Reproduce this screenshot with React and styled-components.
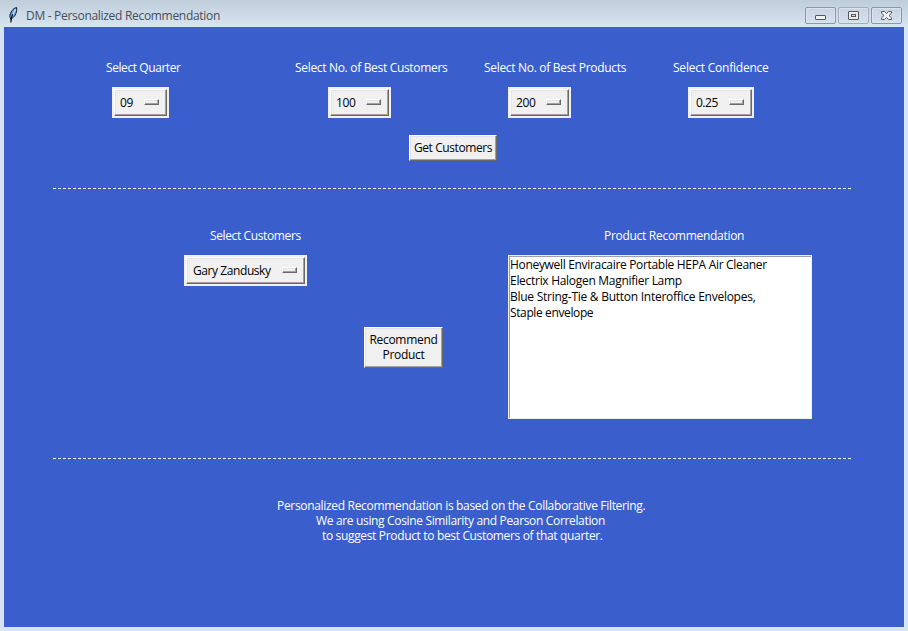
import React from "react";
import styled, { createGlobalStyle } from "styled-components";

const GlobalStyle = createGlobalStyle`
  * { box-sizing: border-box; }
  body {
    margin: 0;
    overflow: hidden;
    font-family: "Open Sans", "Noto Sans", sans-serif;
    font-size: 12px;
    line-height: 15px;
    color: #000;
  }
`;

const Window = styled.div`
  display: flex;
  flex-direction: column;
  width: 908px;
  height: 631px;
  padding: 0 4px 4px;
  background: linear-gradient(#bfcddb 0, #d7e4f2 27px);
`;

const TitleBar = styled.header`
  display: flex;
  flex: none;
  height: 27px;
  padding: 7px 2px 0 4px;
`;

const Title = styled.span`
  flex: 1;
  margin: 1px 0 0 7px;
  color: #474d55;
  white-space: nowrap;
  letter-spacing: ${(p) => p.$spacing}px;
`;

const WindowButtons = styled.div`
  display: flex;
  gap: 2px;
`;

const WindowButton = styled.button`
  display: flex;
  align-items: center;
  justify-content: center;
  width: 31px;
  height: 17px;
  padding: ${(p) => p.$drop || 0}px 0 0;
  border: 1px solid ${(p) => (p.$dim ? "#a0adba" : "#8997a7")};
  border-radius: 2px;
  background: linear-gradient(#c7d3e1, #d4e0ee);
  box-shadow: inset 0 0 0 1px #d8e3ef;
`;

const Client = styled.main`
  display: flex;
  flex-direction: column;
  flex: 1;
  background: #3a5fcd;
`;

const Row = styled.div`
  display: flex;
  flex: none;
  align-items: flex-start;
  height: ${(p) => p.$height}px;
`;

const Stack = styled.div`
  display: flex;
  flex-direction: column;
  width: ${(p) => p.$width}px;
`;

const Label = styled.span`
  flex: none;
  width: ${(p) => p.$width}px;
  margin-left: ${(p) => p.$gap}px;
  color: #fff;
  white-space: nowrap;
  letter-spacing: ${(p) => p.$spacing || 0}px;
`;

const MenuButton = styled.button`
  flex: none;
  width: ${(p) => p.$width}px;
  height: 31px;
  margin-left: ${(p) => p.$gap}px;
  padding: 2px;
  border: 0;
  background: #f0f0f0;
  font: inherit;
`;

const MenuFace = styled.span`
  display: flex;
  align-items: center;
  justify-content: space-between;
  height: 27px;
  padding: 0 7px 0 ${(p) => p.$inset}px;
  border: 1px solid;
  border-color: #fff #696969 #696969 #fff;
  box-shadow: inset -1px -1px #a0a0a0, inset 1px 1px #e3e3e3;
  white-space: nowrap;
  letter-spacing: ${(p) => p.$spacing || 0}px;
`;

const Indicator = styled.i`
  width: 15px;
  height: 6px;
  margin-bottom: 1px;
  border: 1px solid;
  border-color: #fff #696969 #696969 #fff;
  box-shadow: inset -1px -1px #a0a0a0, inset 1px 1px #e3e3e3;
`;

const PushButton = styled.button`
  flex: none;
  width: ${(p) => p.$width}px;
  height: ${(p) => p.$height}px;
  margin-left: ${(p) => p.$gap}px;
  padding: 0 0 2px;
  border: 1px solid;
  border-color: #fff #696969 #696969 #fff;
  background: #f0f0f0;
  box-shadow: inset -1px -1px #a0a0a0, inset 1px 1px #e3e3e3;
  font: inherit;
  white-space: pre;
  letter-spacing: ${(p) => p.$spacing || 0}px;
`;

const Divider = styled.div`
  flex: none;
  width: 799px;
  height: 1px;
  margin-left: 49px;
  background: repeating-linear-gradient(90deg, #fff 0 3px, transparent 3px 5px);
`;

const ListBox = styled.ul`
  width: 304px;
  height: 164px;
  margin: 0;
  padding: 1px 0 0 0;
  list-style: none;
  background: #fff;
  border: 1px solid #f0f0f0;
  box-shadow: inset 1px 1px #a0a0a0;
`;

const ListItem = styled.li`
  height: 16px;
  padding-left: 1px;
  line-height: 16px;
  white-space: nowrap;
  letter-spacing: ${(p) => p.$spacing || 0}px;
`;

const Note = styled.p`
  margin: 0;
  color: #fff;
  white-space: nowrap;
  padding-left: ${(p) => p.$gap}px;
  letter-spacing: ${(p) => p.$spacing || 0}px;
`;

const Spacer = styled.div`
  flex: none;
  height: ${(p) => p.$height}px;
`;

const Feather = () => (
  <svg width="11" height="17" viewBox="0 0 11 17">
    <path d="M8.6.5C5 1.2 2.3 5 1.8 9.4l1 3 1.6-1.3C7.4 9.2 9.2 4.5 8.6.5Z" fill="#69a5e5" stroke="#111b29" strokeWidth="1" />
    <path d="M7.6 2.3 4.2 9.2" stroke="#c7e0fa" strokeWidth="1.2" />
    <path d="M4.6 7.2C3.6 9.5 3 12 2.8 15.5" fill="none" stroke="#050505" strokeWidth="1.2" />
  </svg>
);

const MinimizeIcon = () => (
  <svg width="11" height="5" viewBox="0 0 11 5">
    <rect x=".5" y=".5" width="10" height="4" rx=".5" fill="#f1f1ed" stroke="#535666" />
  </svg>
);

const MaximizeIcon = () => (
  <svg width="11" height="9" viewBox="0 0 11 9">
    <rect x=".5" y=".5" width="10" height="8" rx=".5" fill="#e9e9e5" stroke="#535666" />
    <rect x="3.5" y="3.5" width="4" height="2" fill="#d3dce7" stroke="#535666" />
  </svg>
);

const CloseIcon = () => (
  <svg width="11" height="9" viewBox="0 0 11 9">
    <path d="M.5.5h3l2 2 2-2h3v1.6L8 4.5l2.5 2.4v1.6h-3l-2-2-2 2h-3V6.9L3 4.5.5 2.1Z" fill="#f1f1ed" stroke="#535666" strokeLinejoin="round" />
  </svg>
);

const OptionMenu = ({ value, width, gap, spacing, inset = 5 }) => (
  <MenuButton $width={width} $gap={gap}>
    <MenuFace $spacing={spacing} $inset={inset}>
      {value}
      <Indicator />
    </MenuFace>
  </MenuButton>
);

export default function App() {
  return (
    <>
      <GlobalStyle />
      <Window>
        <TitleBar>
          <Feather />
          <Title $spacing={-0.3}>DM - Personalized Recommendation</Title>
          <WindowButtons>
            <WindowButton aria-label="Minimize" $drop={4}><MinimizeIcon /></WindowButton>
            <WindowButton aria-label="Maximize" $dim><MaximizeIcon /></WindowButton>
            <WindowButton aria-label="Close"><CloseIcon /></WindowButton>
          </WindowButtons>
        </TitleBar>
        <Client>
          <Spacer $height={33} />
          <Row $height={27}>
            <Label $gap={102} $width={76} $spacing={-0.42}>Select Quarter</Label>
            <Label $gap={113} $width={153} $spacing={-0.32}>Select No. of Best Customers</Label>
            <Label $gap={36} $width={143} $spacing={-0.31}>Select No. of Best Products</Label>
            <Label $gap={46} $width={97} $spacing={-0.22}>Select Confidence</Label>
          </Row>
          <Row $height={48}>
            <OptionMenu value="09" gap={108} width={57} spacing={-0.4} />
            <OptionMenu value="100" gap={159} width={63} spacing={-0.4} />
            <OptionMenu value="200" gap={117} width={63} spacing={-0.4} />
            <OptionMenu value="0.25" gap={117} width={66} spacing={-0.5} />
          </Row>
          <Row $height={53}>
            <PushButton $gap={405} $width={88} $height={26} $spacing={-0.42}>Get Customers</PushButton>
          </Row>
          <Divider />
          <Spacer $height={39} />
          <Row $height={230}>
            <Stack $width={504}>
              <Row $height={27}>
                <Label $gap={206} $width={92} $spacing={-0.38}>Select Customers</Label>
              </Row>
              <Row $height={72}>
                <OptionMenu value="Gary Zandusky" gap={180} width={123} inset={6} spacing={-0.42} />
              </Row>
              <PushButton $gap={360} $width={79} $height={41} $spacing={-0.3}>{"Recommend\nProduct"}</PushButton>
            </Stack>
            <Stack $width={304}>
              <Row $height={27}>
                <Label $gap={96} $width={141} $spacing={-0.29}>Product Recommendation</Label>
              </Row>
              <ListBox>
                <ListItem $spacing={-0.32}>Honeywell Enviracaire Portable HEPA Air Cleaner</ListItem>
                <ListItem $spacing={-0.29}>Electrix Halogen Magnifier Lamp</ListItem>
                <ListItem $spacing={-0.26}>Blue String-Tie &amp; Button Interoffice Envelopes,</ListItem>
                <ListItem $spacing={-0.38}>Staple envelope</ListItem>
              </ListBox>
            </Stack>
          </Row>
          <Divider />
          <Spacer $height={39} />
          <Note $gap={273} $spacing={-0.32}>Personalized Recommendation is based on the Collaborative Filtering.</Note>
          <Note $gap={312} $spacing={-0.34}>We are using Cosine Similarity and Pearson Correlation</Note>
          <Note $gap={318} $spacing={-0.34}>to suggest Product to best Customers of that quarter.</Note>
        </Client>
      </Window>
    </>
  );
}
